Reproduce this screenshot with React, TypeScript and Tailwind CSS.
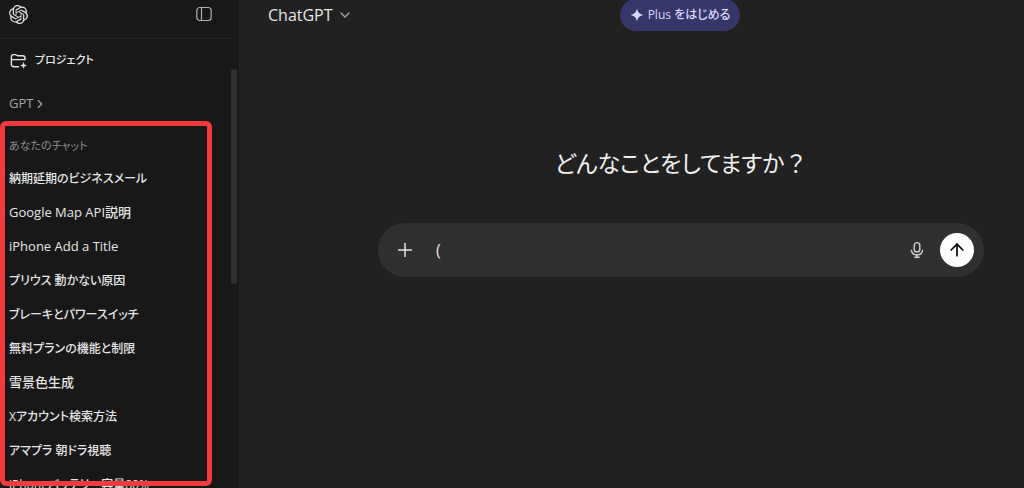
import { ArrowUp, ChevronDown, ChevronRight, Plus } from "lucide-react";
import { SiOpenai } from "react-icons/si";

const CHATS = [
  { title: "納期延期のビジネスメール", size: "text-xs" },
  { title: "Google Map API説明", size: "text-[13px]" },
  { title: "iPhone Add a Title", size: "text-[13px]" },
  { title: "プリウス 動かない原因", size: "text-xs" },
  { title: "ブレーキとパワースイッチ", size: "text-xs" },
  { title: "無料プランの機能と制限", size: "text-xs" },
  { title: "雪景色生成", size: "text-[13px]" },
  { title: "Xアカウント検索方法", size: "text-xs" },
  { title: "アマプラ 朝ドラ視聴", size: "text-xs" },
  { title: "iPhoneバッテリー容量80%", size: "text-xs" },
];

function SidebarIcon() {
  return (
    <svg width="16" height="16" viewBox="0 0 16 16" fill="none" stroke="currentColor" strokeWidth="1.2">
      <rect x="0.8" y="1.5" width="14.4" height="13" rx="3" />
      <path d="M5.5 1.5v13" />
    </svg>
  );
}

function NewProjectIcon() {
  return (
    <svg
      width="18"
      height="16"
      viewBox="0 0 18 16"
      fill="none"
      stroke="currentColor"
      strokeWidth="1.4"
      strokeLinecap="round"
      strokeLinejoin="round"
    >
      <path d="M9.5 13.8H4.8A2.4 2.4 0 0 1 2.4 11.4V3.8A2.2 2.2 0 0 1 4.6 1.6h1.6c.7 0 1.1.2 1.6.7.4.4.8.5 1.5.5h4.500a2.200 2.200 0 0 1 2.200 2.200v1.600" />
      <path d="M2.400 6.600H16" />
      <path
        d="M14.500 9.500l.8 2.200 2.200.8-2.200.8-.8 2.200-.8-2.200-2.200-.8 2.200-.8z"
        fill="currentColor"
        strokeWidth="0.4"
      />
    </svg>
  );
}

function SparkIcon() {
  return (
    <svg width="14" height="14" viewBox="0 0 14 14" fill="currentColor">
      <path d="M7 .6c.9 3.800 2 5.200 6.400 6.400C9 8.200 7.900 9.600 7 13.400 6.100 9.600 5 8.200.6 7 5 5.800 6.100 4.400 7 .6z" />
    </svg>
  );
}

function MicIcon() {
  return (
    <svg
      width="18"
      height="18"
      viewBox="0 0 18 18"
      fill="none"
      stroke="currentColor"
      strokeWidth="1.4"
      strokeLinecap="round"
    >
      <rect x="6.200" y="1.600" width="5.600" height="9.400" rx="2.800" />
      <path d="M3.400 9.400a5.700 5.700 0 0 0 11.200 0" />
      <path d="M9 14.200v1.800M6.800 16.300h4.400" />
    </svg>
  );
}

function Sidebar() {
  return (
    <aside className="relative flex w-[239px] shrink-0 bg-[#181818]">
      <div className="flex min-w-0 flex-1 flex-col">
        <div className="mb-2.5 flex h-7 shrink-0 items-center justify-between pr-[19px] pl-[9px]">
          <a href="#" aria-label="ChatGPT" className="text-[#e4e4e4]">
            <SiOpenai size={19} />
          </a>
          <button type="button" aria-label="サイドバーを閉じる" className="text-[#b0b0b0]">
            <SidebarIcon />
          </button>
        </div>

        <div className="flex h-11 shrink-0 items-center border-t border-[#232323] pl-[9px]">
          <button type="button" className="flex items-center gap-2 text-[11px] font-medium">
            <NewProjectIcon />
            プロジェクト
          </button>
        </div>

        <div className="flex h-11 shrink-0 items-center pl-[9px]">
          <button type="button" className="flex items-center text-[#a6a6a6]">
            GPT
            <ChevronRight size={14} />
          </button>
        </div>

        <nav className="flex flex-col" aria-labelledby="chats-heading">
          <h2 id="chats-heading" className="flex h-9 shrink-0 items-center pt-1 pl-[9px] text-[11px] text-[#8f8f8f]">
            あなたのチャット
          </h2>
          {CHATS.map((chat) => (
            <a
              key={chat.title}
              href="#"
              className={`flex h-[34px] shrink-0 items-center whitespace-nowrap pl-[9px] font-medium ${chat.size}`}
            >
              {chat.title}
            </a>
          ))}
        </nav>
      </div>

      <div className="w-2 shrink-0 pr-0.5 pt-[69px]">
        <div className="h-[215px] rounded-full bg-[#303030]" />
      </div>

      {/* highlight around the chat history */}
      <div className="pointer-events-none absolute top-[121px] right-[27px] bottom-0.5 left-0 rounded-md border-[5px] border-[#f43b3b]" />
    </aside>
  );
}

export default function App() {
  return (
    <div className="flex h-screen overflow-hidden bg-[#212121] font-['Open_Sans','Noto_Sans_CJK_JP',sans-serif] text-[13px] text-[#e6e6e6] [font-feature-settings:'palt']">
      <Sidebar />

      <main className="flex min-w-0 flex-1 flex-col">
        <header className="flex h-[30px] shrink-0 items-center pr-7 pl-[29px]">
          <button type="button" className="flex w-24 shrink-0 items-center gap-1 text-base">
            ChatGPT
            <ChevronDown size={16} className="text-[#a6a6a6]" />
          </button>
          <div className="flex flex-1 justify-center">
            <button
              type="button"
              className="flex h-8 items-center gap-1 rounded-full bg-[#373669] px-2.5 text-xs font-medium text-[#d9d8ff]"
            >
              <SparkIcon />
              Plus をはじめる
            </button>
          </div>
        </header>

        <div className="flex flex-col pt-[113px] pr-10 pl-[139px]">
          <h1 className="text-center text-[23px] leading-10 text-[#f0f0f0]">
            どんなことをしてますか<span className="[font-feature-settings:normal]">？</span>
          </h1>
          <form className="mt-10 flex h-[54px] items-center rounded-full bg-[#303030] pr-2.5 pl-4">
            <button type="button" aria-label="追加">
              <Plus size={22} strokeWidth={1.6} />
            </button>
            <input
              type="text"
              aria-label="メッセージ"
              defaultValue="("
              className="ml-5 min-w-0 flex-1 bg-transparent text-base outline-none"
            />
            <button type="button" aria-label="音声入力" className="mr-3.5 text-[#cfcfcf]">
              <MicIcon />
            </button>
            <button
              type="submit"
              aria-label="送信"
              className="flex size-[34px] items-center justify-center rounded-full bg-white text-black"
            >
              <ArrowUp size={20} strokeWidth={2} />
            </button>
          </form>
        </div>
      </main>
    </div>
  );
}
